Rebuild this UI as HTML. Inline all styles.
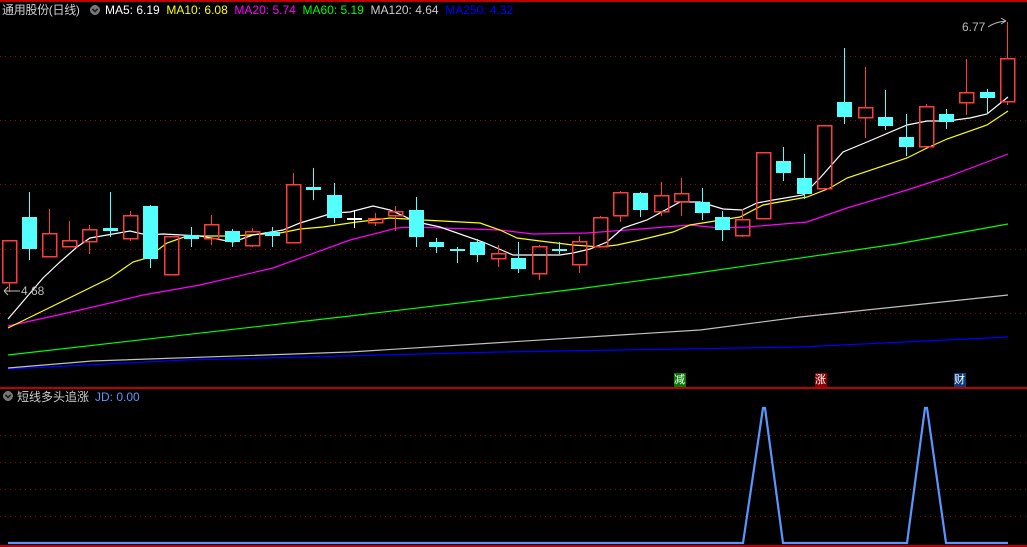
<!DOCTYPE html>
<html><head><meta charset="utf-8"><style>
html,body{margin:0;padding:0;background:#000;width:1027px;height:547px;overflow:hidden}
.t{position:absolute;font:12px "Liberation Sans","Noto Sans CJK SC",sans-serif;white-space:nowrap;line-height:14px}
</style></head><body>
<svg width="1027" height="547" style="position:absolute;left:0;top:0" shape-rendering="crispEdges">
<rect x="0" y="0" width="1027" height="2" fill="#c00000"/>
<g stroke="#a00000" stroke-dasharray="1 4" stroke-width="1">
<line x1="0" y1="56.5" x2="1027" y2="56.5"/><line x1="0" y1="120.5" x2="1027" y2="120.5"/><line x1="0" y1="184.5" x2="1027" y2="184.5"/><line x1="0" y1="249.5" x2="1027" y2="249.5"/><line x1="0" y1="313.5" x2="1027" y2="313.5"/>
<line x1="0" y1="435.5" x2="1027" y2="435.5"/><line x1="0" y1="462.5" x2="1027" y2="462.5"/><line x1="0" y1="489.5" x2="1027" y2="489.5"/><line x1="0" y1="516.5" x2="1027" y2="516.5"/>
</g>
<rect x="0" y="387" width="1027" height="2" fill="#c00000"/>
<rect x="0" y="545" width="1027" height="2" fill="#c00000"/>
<g fill="none" stroke-width="1.2" shape-rendering="auto">
<polyline stroke="#0000ff" points="8,369 185,360 500,352 800,347 1008,337"/>
<polyline stroke="#c0c0c0" points="8,368 92,361 350,352 700,330 800,317 1008,295"/>
<polyline stroke="#00ff00" points="8,355 350,316 577,289 690,274 897,244 1008,224"/>
<polyline stroke="#ff00ff" points="8,326 67,313 110,303 143,295 200,285 273,268 350,240 397,228 413,227 500,230 533,234 587,233 640,229 690,225 720,228 747,227 807,222 847,208 907,190 947,177 1008,154"/>
<polyline stroke="#ffff00" points="8,328 110,278 133,262 147,258 167,243 187,236 233,236 280,233 300,229 323,227 357,222 390,218 423,220 480,223 500,230 517,238 540,241 573,245 600,247 617,245 640,240 673,232 690,225 740,217 763,205 807,197 830,188 847,178 907,158 927,148 947,139 987,125 1008,111"/>
<polyline stroke="#ffffff" points="8,319 43,278 60,262 77,247 90,238 130,231 147,235 163,234 200,236 233,242 253,235 283,230 300,223 333,213 350,212 373,206 390,210 417,222 440,227 483,242 513,255 560,255 573,253 590,249 607,242 623,228 647,220 680,202 700,202 723,209 742,210 757,203 773,200 803,195 820,178 843,152 867,142 907,125 927,121 947,121 970,118 987,114 1008,97"/>
</g>
<g id="c"></g>
<polyline fill="none" stroke="#5a96ff" stroke-width="2.2" points="8,543 743,543 763,408 765,408 783,543 907,543 925,408 927,408 946,543 1008,543" shape-rendering="auto"/>
<rect x="674" y="373" width="12" height="14" fill="#007a00"/>
<rect x="815" y="373" width="12" height="14" fill="#8a0000"/>
<rect x="954" y="373" width="12" height="14" fill="#0a3c7a"/>
<circle cx="95" cy="10" r="5" fill="#777"/><path d="M92.5 9 L95 11.5 L97.5 9" stroke="#222" stroke-width="1.5" fill="none"/>
<circle cx="8" cy="396" r="5" fill="#777"/><path d="M5.5 395 L8 397.5 L10.5 395" stroke="#222" stroke-width="1.5" fill="none"/>
<path d="M4 291 H20 M4 291 L8 287 M4 291 L8 295" stroke="#bbb" stroke-width="1" fill="none" shape-rendering="auto"/>
<path d="M988 27 Q995 22 1006 21 M1006 21 L1001 18 M1006 21 L1001 24" stroke="#bbb" stroke-width="1" fill="none" shape-rendering="auto"/>
</svg>
<div class="t" style="left:2px;top:3px;color:#d0d0d0;letter-spacing:-0.3px">通用股份(日线)</div>
<div class="t" style="left:105px;top:3px"><span style="color:#fff">MA5: 6.19</span>&nbsp; <span style="color:#ff0">MA10: 6.08</span>&nbsp; <span style="color:#f0f">MA20: 5.74</span>&nbsp; <span style="color:#0f0">MA60: 5.19</span>&nbsp; <span style="color:#ccc">MA120: 4.64</span>&nbsp; <span style="color:#00f">MA250: 4.32</span></div>
<div class="t" style="left:17px;top:390px;color:#ccc">短线多头追涨</div>
<div class="t" style="left:95px;top:390px;color:#5a96ff">JD: 0.00</div>
<div class="t" style="left:21px;top:284px;color:#bbb">4.68</div>
<div class="t" style="left:962px;top:20px;color:#bbb">6.77</div>
<div class="t" style="left:674px;top:373px;color:#fff;font-size:11px">减</div>
<div class="t" style="left:815px;top:373px;color:#fff;font-size:11px">涨</div>
<div class="t" style="left:954px;top:373px;color:#fff;font-size:11px">财</div>
<script>
var d=[[9,'r',240,282,240,292],[29,'c',217,249,192,260],[49,'r',233,256,209,256],[69,'r',240,246,221,246],[89,'r',229,241,225,254],[110,'c',228,231,192,237],[130,'r',215,238,211,241],[150,'c',206,259,205,268],[171,'r',236,274,236,274],[191,'c',235,239,227,247],[211,'r',224,238,215,245],[232,'c',231,242,229,247],[252,'r',231,245,228,247],[272,'c',232,236,227,247],[293,'r',184,242,173,242],[313,'c',187,190,168,200],[334,'c',195,218,183,223],[354,'w',218,218,210,228],[375,'r',218,222,213,226],[395,'r',211,215,206,231],[416,'c',210,237,197,247],[436,'c',242,247,238,253],[457,'c',249,251,247,263],[477,'c',242,255,239,262],[498,'r',253,258,245,267],[518,'c',258,269,242,273],[539,'r',246,273,245,280],[559,'c',249,251,242,254],[579,'r',241,264,236,273],[600,'r',217,246,216,247],[620,'r',192,215,191,222],[640,'c',193,210,192,217],[661,'r',195,211,182,216],[681,'r',193,201,178,216],[702,'c',202,213,188,220],[722,'c',217,230,211,241],[742,'r',219,235,209,237],[763,'r',152,218,152,219],[783,'c',161,173,147,181],[804,'c',178,194,154,199],[824,'r',125,188,125,189],[844,'c',102,117,48,124],[865,'r',107,117,67,138],[885,'c',117,126,90,130],[906,'c',137,147,114,156],[926,'r',106,146,104,147],[946,'c',114,122,109,129],[966,'r',92,102,59,115],[987,'c',92,98,89,114],[1007,'r',58,101,22,105]];
var s='';d.forEach(function(a){var x=a[0],t=a[1],col=t=='r'?'#ff3c3c':t=='c'?'#54ffff':'#ffffff';
if(t=='r'){s+='<line x1="'+(x+.5)+'" y1="'+a[4]+'" x2="'+(x+.5)+'" y2="'+a[2]+'" stroke="'+col+'"/><line x1="'+(x+.5)+'" y1="'+a[3]+'" x2="'+(x+.5)+'" y2="'+a[5]+'" stroke="'+col+'"/><rect x="'+(x-6.5)+'" y="'+(a[2]+.5)+'" width="14" height="'+(a[3]-a[2])+'" fill="none" stroke="'+col+'" stroke-width="1.5"/>';}
else{s+='<line x1="'+(x+.5)+'" y1="'+a[4]+'" x2="'+(x+.5)+'" y2="'+a[5]+'" stroke="'+col+'"/><rect x="'+(x-7)+'" y="'+a[2]+'" width="15" height="'+Math.max(2,a[3]-a[2])+'" fill="'+col+'"/>';}});
document.getElementById('c').innerHTML=s;
</script>
</body></html>
